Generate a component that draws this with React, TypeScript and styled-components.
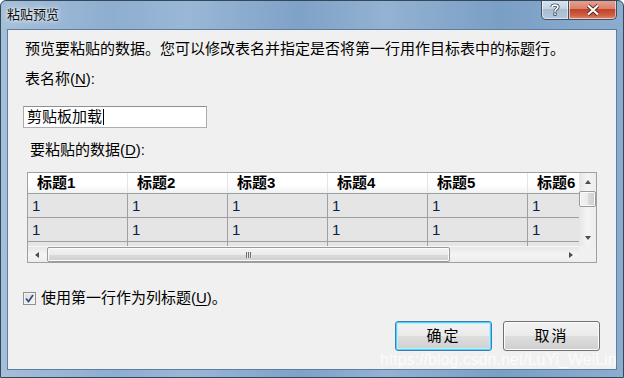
import React from 'react';
import styled, { createGlobalStyle } from 'styled-components';

const GlobalStyle = createGlobalStyle`
  html, body {
    margin: 0;
    padding: 0;
    background: #ffffff;
  }
  * {
    box-sizing: border-box;
  }
`;

const UI_FONT = `"Liberation Sans", "Noto Sans CJK SC", sans-serif`;

const Window = styled.div`
  position: relative;
  width: 624px;
  height: 378px;
  display: flex;
  flex-direction: column;
  border: 1px solid #33475d;
  border-radius: 6px 6px 0 0;
  background: linear-gradient(
    90deg,
    #a6bfd8 0%,
    #8eaed0 18%,
    #9ab7d6 30%,
    #7fa2c7 48%,
    #94b2d2 62%,
    #7a9fc5 80%,
    #8dadcf 100%
  );
  font-family: ${UI_FONT};
  overflow: hidden;
`;

const TitleBar = styled.div`
  height: 28px;
  display: flex;
  justify-content: space-between;
  align-items: flex-start;
  padding: 0 6px 0 6px;
`;

const Title = styled.div`
  margin-top: 5px;
  font-size: 13px;
  line-height: 17px;
  color: #111;
  text-shadow: 0 0 6px rgba(255, 255, 255, 0.95), 0 0 3px rgba(255, 255, 255, 0.9);
`;

const Controls = styled.div`
  display: flex;
  margin-top: -1px;
`;

const CaptionButton = styled.div<{ $kind: 'help' | 'close' }>`
  width: ${(p) => (p.$kind === 'close' ? 48 : 28)}px;
  height: 20px;
  display: flex;
  align-items: center;
  justify-content: center;
  border: 1px solid #3f5064;
  border-top: none;
  border-left: ${(p) => (p.$kind === 'close' ? 'none' : '1px solid #3f5064')};
  border-radius: ${(p) => (p.$kind === 'close' ? '0 0 5px 0' : '0 0 0 5px')};
  box-shadow: inset 0 0 0 1px rgba(255, 255, 255, 0.55);
  background: ${(p) =>
    p.$kind === 'close'
      ? 'linear-gradient(180deg, #e8a493 0%, #d9826c 45%, #c0432b 50%, #cf5d40 80%, #e18a6c 100%)'
      : 'linear-gradient(180deg, #dbe5ef 0%, #c4d3e2 45%, #a9bdd2 50%, #b3c6d9 100%)'};
`;

const Frame = styled.div`
  flex: 1;
  display: flex;
  padding: 0 6px 7px 6px;
`;

const Client = styled.div`
  flex: 1;
  display: flex;
  flex-direction: column;
  background: #f0f0f0;
  border: 1px solid #5b7da2;
  padding: 0 16px 0 0;
  color: #000;
  font-size: 15px;
`;

const Text = styled.div<{ $top: number; $left: number }>`
  margin-top: ${(p) => p.$top}px;
  margin-left: ${(p) => p.$left}px;
  line-height: 18px;
  white-space: nowrap;
  u {
    text-decoration: underline;
    text-underline-offset: 2px;
  }
`;

const NameInput = styled.div`
  margin-top: 18px;
  margin-left: 15px;
  width: 184px;
  height: 22px;
  display: flex;
  align-items: center;
  padding-left: 3px;
  background: #ffffff;
  border: 1px solid #abadb3;
  border-top-color: #8e8f8f;
  line-height: 18px;
  white-space: nowrap;
`;

const Caret = styled.span`
  display: inline-block;
  width: 1px;
  height: 16px;
  margin-left: 1px;
  background: #000;
`;

const GridBox = styled.div`
  margin-top: 13px;
  margin-left: 19px;
  width: 570px;
  height: 91px;
  border: 1px solid #a0a0a0;
  display: grid;
  grid-template-columns: 1fr 17px;
  grid-template-rows: 1fr 16px;
  background: #f0f0f0;
`;

const Viewport = styled.div`
  overflow: hidden;
  background: #ffffff;
`;

const Row = styled.div<{ $head?: boolean }>`
  display: flex;
  height: ${(p) => (p.$head ? 21 : 24)}px;
  border-bottom: 1px solid #a0a0a0;
  background: ${(p) =>
    p.$head ? 'linear-gradient(180deg, #ffffff 0%, #ffffff 60%, #f1f2f4 100%)' : '#e5e5e5'};
`;

const Cell = styled.div<{ $head?: boolean }>`
  flex: 0 0 100px;
  display: flex;
  align-items: center;
  padding-left: ${(p) => (p.$head ? 9 : 4)}px;
  border-right: 1px solid ${(p) => (p.$head ? '#e3e4e6' : '#a0a0a0')};
  color: ${(p) => (p.$head ? '#000' : '#0c244a')};
  font-size: 15px;
  line-height: 18px;
  font-weight: ${(p) => (p.$head ? 600 : 400)};
  white-space: nowrap;
`;

const VScroll = styled.div`
  display: flex;
  flex-direction: column;
  background: linear-gradient(90deg, #e6e6e6 0%, #f4f4f4 50%, #ececec 100%);
`;

const HScroll = styled.div`
  display: flex;
  align-items: stretch;
  border-top: 1px solid #f7f7f7;
  background: linear-gradient(180deg, #e6e6e6 0%, #f4f4f4 50%, #ececec 100%);
`;

const ArrowBox = styled.div<{ $w: number; $h: number }>`
  flex: 0 0 auto;
  width: ${(p) => p.$w}px;
  height: ${(p) => p.$h}px;
  display: flex;
  align-items: center;
  justify-content: center;
`;

const Arrow = styled.span<{ $dir: 'up' | 'down' | 'left' | 'right' }>`
  width: 0;
  height: 0;
  border-style: solid;
  border-color: transparent;
  ${(p) =>
    p.$dir === 'up'
      ? 'border-width: 0 3.5px 4px 3.5px; border-bottom-color: #4d4d4d;'
      : p.$dir === 'down'
      ? 'border-width: 4px 3.5px 0 3.5px; border-top-color: #4d4d4d;'
      : p.$dir === 'left'
      ? 'border-width: 3.5px 4px 3.5px 0; border-right-color: #4d4d4d;'
      : 'border-width: 3.5px 0 3.5px 4px; border-left-color: #4d4d4d;'}
`;

const Thumb = styled.div<{ $horizontal?: boolean }>`
  border: 1px solid #9a9a9a;
  border-radius: 2px;
  box-shadow: inset 0 0 0 1px #fbfbfb;
  display: flex;
  align-items: center;
  justify-content: center;
  ${(p) =>
    p.$horizontal
      ? `
    width: 403px;
    margin: 0 0 0 2px;
    background: linear-gradient(180deg, #f3f3f3 0%, #ebebeb 50%, #dbdbdb 51%, #cfcfcf 100%);
  `
      : `
    height: 16px;
    margin: 1px 0 0 0;
    background: linear-gradient(90deg, #f3f3f3 0%, #ebebeb 50%, #dbdbdb 51%, #cfcfcf 100%);
  `}
`;

const Grip = styled.span`
  width: 6px;
  height: 6px;
  background: repeating-linear-gradient(90deg, #6f6f6f 0 1px, #e8e8e8 1px 2px);
`;

const Spacer = styled.div`
  flex: 1;
`;

const Corner = styled.div`
  background: #f0f0f0;
`;

const CheckRow = styled.div`
  margin-top: 26px;
  margin-left: 15px;
  display: flex;
  align-items: center;
  gap: 5px;
  line-height: 18px;
  white-space: nowrap;
  u {
    text-decoration: underline;
    text-underline-offset: 2px;
  }
`;

const CheckBox = styled.span`
  width: 13px;
  height: 13px;
  border: 1px solid #8e8f8f;
  background: linear-gradient(135deg, #dcdcdc 0%, #f6f6f6 100%);
  box-shadow: inset 0 0 0 1px #f4f4f4;
  display: flex;
  align-items: center;
  justify-content: center;
`;

const ButtonRow = styled.div`
  margin-top: 14px;
  display: flex;
  justify-content: flex-end;
  gap: 11px;
`;

const DialogButton = styled.div<{ $default?: boolean }>`
  width: 97px;
  height: 30px;
  display: flex;
  align-items: center;
  justify-content: center;
  border-radius: 3px;
  border: 1px solid ${(p) => (p.$default ? '#3c7fb1' : '#707070')};
  box-shadow: ${(p) =>
    p.$default ? 'inset 0 0 0 1px #48d6ff, inset 0 0 0 2px #c3ecfb' : 'inset 0 0 0 1px #fcfcfc'};
  background: linear-gradient(180deg, #f2f2f2 0%, #ebebeb 48%, #dddddd 52%, #cfcfcf 100%);
  font-size: 15px;
  line-height: 18px;
  letter-spacing: 2px;
`;

const Watermark = styled.div`
  position: absolute;
  left: 379px;
  top: 350px;
  font-family: "Liberation Sans", Arial, sans-serif;
  font-size: 16px;
  color: rgba(255, 255, 255, 0.78);
  white-space: nowrap;
  pointer-events: none;
`;

const columns = ['标题1', '标题2', '标题3', '标题4', '标题5', '标题6'];
// third row is only a sliver in view, its values sit below the fold
const rows = ['1', '1', ''];

const App: React.FC = () => {
  return (
    <>
      <GlobalStyle />
      <Window>
        <TitleBar>
          <Title>粘贴预览</Title>
          <Controls>
            <CaptionButton $kind="help">
              <svg width="10" height="13" viewBox="0 0 10 13">
                <path
                  d="M2 4 C2 1.5 8 1.5 8 4 C8 6 5 6 5 8.5"
                  fill="none"
                  stroke="#3e4c5c"
                  strokeWidth="3.2"
                />
                <path
                  d="M2 4 C2 1.5 8 1.5 8 4 C8 6 5 6 5 8.5"
                  fill="none"
                  stroke="#ffffff"
                  strokeWidth="1.6"
                />
                <rect x="3.4" y="9.6" width="3.2" height="3.2" fill="#3e4c5c" />
                <rect x="4.2" y="10.4" width="1.6" height="1.6" fill="#ffffff" />
              </svg>
            </CaptionButton>
            <CaptionButton $kind="close">
              <svg width="14" height="12" viewBox="0 0 14 12">
                <path d="M2 1.5 L12 10.5 M12 1.5 L2 10.5" stroke="#5a2a22" strokeWidth="4" />
                <path d="M2 1.5 L12 10.5 M12 1.5 L2 10.5" stroke="#ffffff" strokeWidth="2.2" />
              </svg>
            </CaptionButton>
          </Controls>
        </TitleBar>
        <Frame>
          <Client>
            <Text $top={10} $left={17}>
              预览要粘贴的数据。您可以修改表名并指定是否将第一行用作目标表中的标题行。
            </Text>
            <Text $top={12} $left={17}>
              表名称(<u>N</u>):
            </Text>
            <NameInput>
              剪贴板加载
              <Caret />
            </NameInput>
            <Text $top={13} $left={22}>
              要粘贴的数据(<u>D</u>):
            </Text>
            <GridBox>
              <Viewport>
                <Row $head>
                  {columns.map((c) => (
                    <Cell $head key={c}>
                      {c}
                    </Cell>
                  ))}
                </Row>
                {rows.map((value, r) => (
                  <Row key={r}>
                    {columns.map((c) => (
                      <Cell key={c}>{value}</Cell>
                    ))}
                  </Row>
                ))}
              </Viewport>
              <VScroll>
                <ArrowBox $w={17} $h={17}>
                  <Arrow $dir="up" />
                </ArrowBox>
                <Thumb />
                <Spacer />
                <ArrowBox $w={17} $h={17}>
                  <Arrow $dir="down" />
                </ArrowBox>
              </VScroll>
              <HScroll>
                <ArrowBox $w={17} $h={15}>
                  <Arrow $dir="left" />
                </ArrowBox>
                <Thumb $horizontal>
                  <Grip />
                </Thumb>
                <Spacer />
                <ArrowBox $w={17} $h={15}>
                  <Arrow $dir="right" />
                </ArrowBox>
              </HScroll>
              <Corner />
            </GridBox>
            <CheckRow>
              <CheckBox>
                <svg width="9" height="9" viewBox="0 0 9 9">
                  <path d="M1 4.5 L3.5 7.5 L8 1" fill="none" stroke="#3b4f86" strokeWidth="1.8" />
                </svg>
              </CheckBox>
              <span>
                使用第一行作为列标题(<u>U</u>)。
              </span>
            </CheckRow>
            <ButtonRow>
              <DialogButton $default>确定</DialogButton>
              <DialogButton>取消</DialogButton>
            </ButtonRow>
          </Client>
        </Frame>
        <Watermark>https://blog.csdn.net/LuYi_WeiLin</Watermark>
      </Window>
    </>
  );
};

export default App;
